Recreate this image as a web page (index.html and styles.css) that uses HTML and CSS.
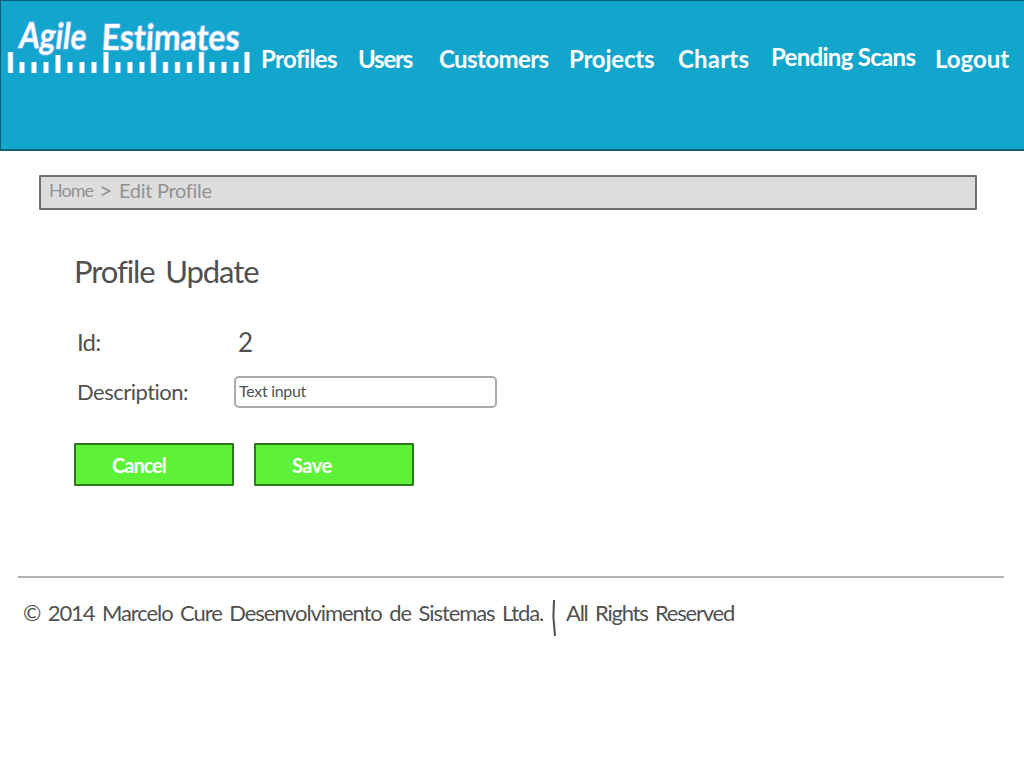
FILE: index.html
```html
<!DOCTYPE html>
<html lang="en">
<head>
<meta charset="utf-8">
<title>Agile Estimates - Edit Profile</title>
<link rel="stylesheet" href="styles.css">
</head>
<body>
<header class="header">
  <svg class="logo" width="245" height="60" viewBox="0 0 245 60" role="img" aria-label="Agile Estimates">
    <g class="logo-text">
      <text transform="translate(14 32) rotate(1) skewX(-6)" textLength="67" lengthAdjust="spacingAndGlyphs">Agile</text>
      <text transform="translate(97 34) skewX(-3)" textLength="138" lengthAdjust="spacingAndGlyphs">Estimates</text>
    </g>
    <g class="logo-specks">
      <path d="M3 8h2M8 13h2M13 7h2M88 8h3M97 7h3M128 8h2M153 7h2M171 8h3M187 7h3M202 9h2M222 7h4M236 8h4"/>
    </g>
    <g class="ruler">
      <path class="ruler-edge" d="M6.5 36v21M18 46v11M30 46v11M42 46v11M54 39v18M66 46v11M78 46v11M90 46v11M102 36v21M114 46v11M126 46v11M138 46v11M149.5 36v21M161.5 46v11M173.5 46v11M185.5 46v11M197.5 36v21M208 46v11M220 46v11M232 46v11M243 36v21"/>
      <path class="ruler-mark" d="M6.5 36v21M18 46v11M30 46v11M42 46v11M54 39v18M66 46v11M78 46v11M90 46v11M102 36v21M114 46v11M126 46v11M138 46v11M149.5 36v21M161.5 46v11M173.5 46v11M185.5 46v11M197.5 36v21M208 46v11M220 46v11M232 46v11M243 36v21"/>
    </g>
  </svg>
  <nav class="nav">
    <a class="nav-profiles">Profiles</a>
    <a class="nav-users">Users</a>
    <a class="nav-customers">Customers</a>
    <a class="nav-projects">Projects</a>
    <a class="nav-charts">Charts</a>
    <a class="nav-scans">Pending Scans</a>
    <a class="nav-logout">Logout</a>
  </nav>
</header>
<div class="breadcrumb"><span class="crumb-home">Home</span> <span class="crumb-arrow">&gt;</span> <span>Edit Profile</span></div>
<main class="content">
  <h1 class="title">Profile Update</h1>
  <div class="row row-id">
    <span class="label-id">Id:</span>
    <span class="value">2</span>
  </div>
  <div class="row row-description">
    <span class="label">Description:</span>
    <div class="input">Text input</div>
  </div>
  <div class="actions">
    <div class="button cancel">Cancel</div>
    <div class="button save">Save</div>
  </div>
</main>
<footer class="footer">
  <span class="copyright">© 2014 Marcelo Cure Desenvolvimento de Sistemas Ltda.</span>
  <svg class="divider" width="6" height="38" viewBox="0 0 6 38"><path d="M2 1 1.4 18 3 37"/></svg>
  <span class="rights">All Rights Reserved</span>
</footer>
</body>
</html>
```
FILE: styles.css
```css
* { box-sizing: border-box; }
body {
  margin: 0;
  background: #fff;
  color: #505050;
  font-family: Lato, "Open Sans", sans-serif;
  font-variant-ligatures: none;
}
.header {
  display: flex;
  height: 151px;
  padding: 15px 0 0 3px;
  background: #12a6cd;
  border: solid #0b5f76;
  border-width: 1px 0 2px 1px;
}
.logo { flex: none; overflow: visible; }
.logo-text {
  font-size: 36px;
  font-weight: 700;
  fill: #fff;
  stroke: #62aef0;
  stroke-width: 2px;
  paint-order: stroke;
}
.logo-specks { stroke: #429be5; stroke-width: 1; }
.ruler { fill: none; }
.ruler-edge { stroke: #70bdf2; stroke-width: 6; }
.ruler-mark { stroke: #fff; stroke-width: 4.4; }
.nav {
  display: grid;
  grid-template-columns: 97px 81px 130px 109px 93px 164px 80px;
  margin-left: 12px;
  padding-top: 28px;
  color: #fff;
  font-size: 24px;
  font-weight: 700;
  line-height: 30px;
  white-space: nowrap;
}
.nav-profiles { letter-spacing: -.6px; }
.nav-users { letter-spacing: -1.2px; }
.nav-customers { letter-spacing: -.6px; }
.nav-projects { letter-spacing: -.2px; }
.nav-charts { letter-spacing: .2px; }
.nav-scans { letter-spacing: -.7px; margin-top: -2px; }
.nav-logout { letter-spacing: 0; }
.breadcrumb {
  display: grid;
  grid-template-columns: 50px 20px auto;
  width: 938px;
  height: 35px;
  margin: 24px 0 0 39px;
  padding-left: 8px;
  background: #ddd;
  border: 2px solid #707070;
  border-radius: 1px;
  color: #929292;
  font-size: 20px;
  line-height: 27px;
  letter-spacing: -.3px;
}
.crumb-home { font-size: 18px; letter-spacing: -1px; }
.crumb-arrow { font-size: 23px; }
.content { padding: 40px 0 0 74px; }
.title {
  margin: 0;
  font-size: 31px;
  font-weight: 400;
  line-height: 42px;
  letter-spacing: -1.1px;
  word-spacing: 4px;
}
.row { display: grid; grid-template-columns: 160px 263px; }
.row-id { margin-top: 34px; line-height: 32px; }
.label-id { padding-left: 3px; font-size: 24px; letter-spacing: -.8px; }
.value { padding-left: 4px; font-size: 26px; }
.row-description { margin-top: 18px; line-height: 32px; }
.label { padding-left: 3px; font-size: 22px; letter-spacing: -.5px; }
.input {
  height: 32px;
  padding-left: 3px;
  border: 2px solid #aaa;
  border-radius: 5px;
  font-size: 16px;
  line-height: 25px;
  letter-spacing: -.3px;
}
.actions { display: flex; gap: 20px; margin-top: 35px; }
.button {
  width: 160px;
  height: 43px;
  padding-left: 36px;
  background: #5df238;
  border: 2px solid #2e791c;
  border-radius: 1px;
  color: #fff;
  font-size: 20px;
  font-weight: 700;
  line-height: 40px;
}
.cancel { letter-spacing: -1px; }
.save { letter-spacing: -.5px; }
.footer {
  display: flex;
  width: 986px;
  margin: 90px 0 0 18px;
  padding: 21px 0 0 5px;
  border-top: 2px solid #b2b2b2;
  font-size: 22px;
  line-height: 28px;
  white-space: nowrap;
}
.copyright { width: 529px; letter-spacing: -1.09px; word-spacing: 3px; }
.divider { fill: none; stroke: #505050; stroke-width: 2; }
.rights { margin-left: 8px; letter-spacing: -1.22px; word-spacing: 3px; }
```
